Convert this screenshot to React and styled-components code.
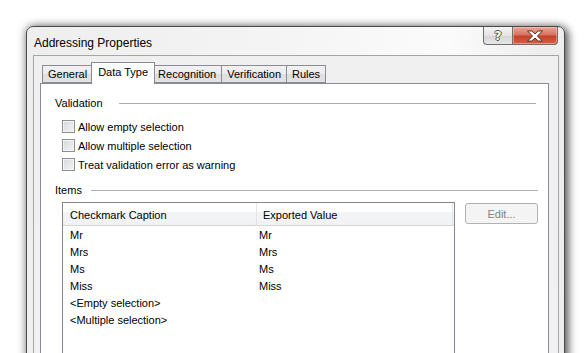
import React from 'react'
import styled, { createGlobalStyle } from 'styled-components'

const GlobalStyle = createGlobalStyle`
  html, body {
    margin: 0;
    padding: 0;
    background: #ffffff;
    overflow: hidden;
  }
  body {
    font-family: "Liberation Sans", Arial, sans-serif;
    font-size: 11px;
    color: #000;
  }
`

const checkboxes = [
  'Allow empty selection',
  'Allow multiple selection',
  'Treat validation error as warning',
]

const items = [
  { caption: 'Mr', value: 'Mr' },
  { caption: 'Mrs', value: 'Mrs' },
  { caption: 'Ms', value: 'Ms' },
  { caption: 'Miss', value: 'Miss' },
  { caption: '<Empty selection>', value: '' },
  { caption: '<Multiple selection>', value: '' },
]

const tabs = ['General', 'Data Type', 'Recognition', 'Verification', 'Rules']

const CloseGlyph = () => (
  <svg width="18" height="12" viewBox="0 0 18 12">
    <path
      d="M1.5 1 H5.8 L9 4 L12.2 1 H16.5 L11.4 6 L16.5 11 H12.2 L9 8 L5.8 11 H1.5 L6.6 6 Z"
      fill="#fff"
      stroke="#5a2a22"
      strokeWidth="1"
      strokeLinejoin="round"
    />
  </svg>
)

const App = () => (
  <Page>
    <GlobalStyle />
    <Window>
      <TitleBar>
        <Title>Addressing Properties</Title>
        <CaptionButtons>
          <HelpButton>?</HelpButton>
          <CloseButton>
            <CloseGlyph />
          </CloseButton>
        </CaptionButtons>
      </TitleBar>

      <Client>
        <TabRow>
          {tabs.map((t) => (
            <Tab key={t} selected={t === 'Data Type'}>
              {t}
            </Tab>
          ))}
        </TabRow>

        <TabPage>
          <GroupHeader gap={16}>Validation</GroupHeader>
          <CheckList>
            {checkboxes.map((c) => (
              <CheckRow key={c}>
                <CheckBox />
                {c}
              </CheckRow>
            ))}
          </CheckList>

          <GroupHeader gap={9} spaced>
            Items
          </GroupHeader>
          <ItemsArea>
            <ListView>
              <ListHeader>
                <HeaderCell width={194}>Checkmark Caption</HeaderCell>
                <HeaderCell width={196} sub>
                  Exported Value
                </HeaderCell>
              </ListHeader>
              {items.map((it) => (
                <ListRow key={it.caption}>
                  <Cell width={194}>{it.caption}</Cell>
                  <Cell width={196} sub>
                    {it.value}
                  </Cell>
                </ListRow>
              ))}
            </ListView>
            <EditButton disabled>Edit...</EditButton>
          </ItemsArea>
        </TabPage>
      </Client>
    </Window>
  </Page>
)

const Page = styled.div`
  padding: 26px 0 0 26px;
  height: 353px;
  box-sizing: border-box;
`

const Window = styled.div`
  width: 539px;
  height: 400px;
  box-sizing: border-box;
  border: 1px solid #4a4a4a;
  border-radius: 7px 7px 0 0;
  padding: 0 5px 0 6px;
  background: linear-gradient(
    100deg,
    #eeeeee 0%,
    #f4f4f4 40%,
    #fbfbfb 70%,
    #eeeeee 85%,
    #efefef 100%
  );
  box-shadow: 0 0 10px rgba(0, 0, 0, 0.45), 4px 2px 8px rgba(0, 0, 0, 0.45);
  display: flex;
  flex-direction: column;
`

const TitleBar = styled.div`
  height: 28px;
  display: flex;
  align-items: flex-start;
  justify-content: space-between;
`

const Title = styled.div`
  font-family: "Liberation Sans", Arial, sans-serif;
  font-size: 12px;
  color: #000;
  padding: 9px 0 0 1px;
`

const CaptionButtons = styled.div`
  display: flex;
  margin-right: 1px;
`

const CaptionButton = styled.div`
  height: 18px;
  box-sizing: border-box;
  display: flex;
  align-items: center;
  justify-content: center;
  border: 1px solid #6f6f6f;
  border-top: none;
`

const HelpButton = styled(CaptionButton)`
  width: 29px;
  border-radius: 0 0 0 4px;
  border-right: none;
  background: linear-gradient(#f4f4f4, #e4e4e4 50%, #d4d4d4 51%, #e6e6e6);
  font-family: "DejaVu Sans", sans-serif;
  font-weight: bold;
  font-size: 12px;
  color: #fafafa;
  text-shadow: -1px 0 #555, 1px 0 #555, 0 -1px #555, 0 1px #555;
`

const CloseButton = styled(CaptionButton)`
  width: 46px;
  border-radius: 0 0 4px 0;
  background: linear-gradient(#e9a89a, #d8725f 45%, #c4432a 55%, #d65f45);
  box-shadow: inset 0 0 0 1px rgba(255, 200, 190, 0.5);
`

const Client = styled.div`
  flex: 1;
  border: 1px solid #a5a5a5;
  border-bottom: none;
  background: #f0f0f0;
  padding: 6px 9px 0 6px;
  display: flex;
  flex-direction: column;
`

const TabRow = styled.div`
  display: flex;
  align-items: flex-end;
  padding-left: 2px;
  position: relative;
  z-index: 1;
`

const Tab = styled.div`
  height: ${(p) => (p.selected ? '22px' : '18px')};
  box-sizing: border-box;
  padding: ${(p) => (p.selected ? '2px 6px 0' : '1px 5px 0')};
  margin: ${(p) => (p.selected ? '0 -2px -1px -2px' : '0 0 0 -1px')};
  border: 1px solid #898c95;
  border-bottom: ${(p) => (p.selected ? 'none' : '1px solid #898c95')};
  background: ${(p) =>
    p.selected ? '#ffffff' : 'linear-gradient(#f2f2f2, #ebebeb 50%, #dedede 51%, #e3e3e3)'};
  font-size: 11px;
  line-height: 15px;
  white-space: nowrap;
  position: relative;
  z-index: ${(p) => (p.selected ? 2 : 1)};

  &:first-child {
    margin-left: 0;
  }
`

const TabPage = styled.div`
  flex: 1;
  background: #ffffff;
  border: 1px solid #898c95;
  border-bottom: none;
  padding: 11px 10px 0 14px;
  display: flex;
  flex-direction: column;
`

const GroupHeader = styled.div`
  display: flex;
  align-items: center;
  height: 16px;
  margin-top: ${(p) => (p.spaced ? '8px' : '0')};
  color: #000;

  &::after {
    content: '';
    flex: 1;
    height: 1px;
    margin-left: ${(p) => p.gap}px;
    margin-right: ${(p) => (p.spaced ? '0' : '2px')};
    background: #a9afb5;
  }
`

const CheckList = styled.div`
  display: flex;
  flex-direction: column;
  margin-top: 6px;
  padding-left: 7px;
`

const CheckRow = styled.label`
  display: flex;
  align-items: center;
  height: 19px;
  gap: 3px;
`

const CheckBox = styled.span`
  width: 13px;
  height: 13px;
  box-sizing: border-box;
  border: 1px solid #8e8f8f;
  background: linear-gradient(135deg, #d6d8db, #f4f4f4);
  box-shadow: inset 0 0 0 1px #f4f4f4;
`

const ItemsArea = styled.div`
  display: flex;
  align-items: flex-start;
  gap: 10px;
  margin-top: 4px;
  padding-left: 7px;
`

const ListView = styled.div`
  width: 393px;
  height: 200px;
  box-sizing: border-box;
  border: 1px solid #828790;
  background: #fff;
`

const ListHeader = styled.div`
  display: flex;
  height: 23px;
  box-sizing: border-box;
  border-bottom: 1px solid #d5d5d5;
  background: linear-gradient(#ffffff, #ffffff 40%, #f3f4f6 41%, #f1f2f4);
`

const HeaderCell = styled.div`
  width: ${(p) => p.width}px;
  box-sizing: border-box;
  display: flex;
  align-items: center;
  padding: 1px 0 0 ${(p) => (p.sub ? '6px' : '7px')};
  border-right: 1px solid #e3e4e6;
  white-space: nowrap;
`

const ListRow = styled.div`
  display: flex;
  height: 17px;
  align-items: center;
`

const Cell = styled.div`
  width: ${(p) => p.width}px;
  box-sizing: border-box;
  padding-left: ${(p) => (p.sub ? '2px' : '7px')};
  white-space: nowrap;
`

const EditButton = styled.button`
  width: 73px;
  height: 21px;
  margin-top: 1px;
  border: 1px solid #adb2b5;
  border-radius: 3px;
  background: #f4f4f4;
  color: #838383;
  font-family: "Liberation Sans", Arial, sans-serif;
  font-size: 11px;
  padding: 0;
`

export default App
